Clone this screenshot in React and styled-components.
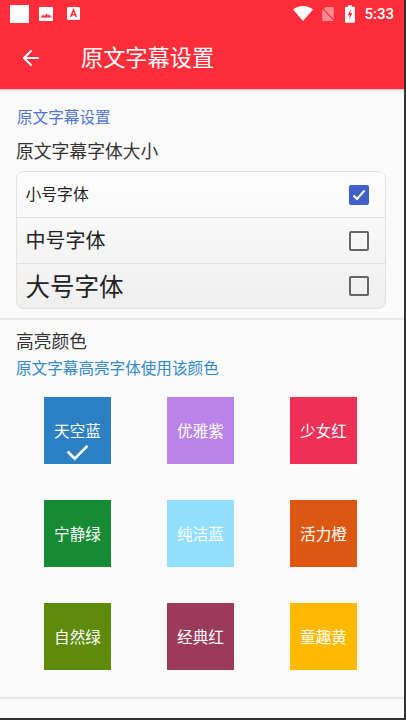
import React from "react";
import styled, { createGlobalStyle } from "styled-components";
import { ArrowLeft } from "lucide-react";

const GlobalStyle = createGlobalStyle`
  html, body {
    margin: 0;
    padding: 0;
    background: #333;
  }
  * {
    box-sizing: border-box;
  }
`;

const FONT = `"Roboto", "Noto Sans CJK SC", sans-serif`;

const Frame = styled.div`
  width: 406px;
  height: 720px;
  padding: 0 2px 2px 0;
  overflow: hidden;
  background: #333;
`;

const Screen = styled.div`
  height: 100%;
  display: flex;
  flex-direction: column;
  background: #fafafa;
  font-family: ${FONT};
`;

const Header = styled.header`
  height: 89px;
  flex: none;
  background: #ff2d3a;
  color: #fff;
  box-shadow: 0 1px 2px rgba(0, 0, 0, 0.25);
  display: flex;
  flex-direction: column;
`;

const StatusBar = styled.div`
  height: 27px;
  padding: 0 10px;
  display: flex;
  align-items: center;
`;

const StatusLeft = styled.div`
  display: flex;
  align-items: center;
  gap: 10px;
  flex: 1;

  svg:last-child {
    margin-left: 4px;
  }
`;

const StatusRight = styled.div`
  display: flex;
  align-items: center;
  gap: 9px;

  svg:nth-child(3) {
    margin-left: 2px;
  }
`;

const Clock = styled.span`
  font-size: 15px;
  font-weight: 500;
`;

const BlankIcon = styled.span`
  width: 19px;
  height: 18px;
  background: #fff;
  display: block;
`;

const Toolbar = styled.div`
  flex: 1;
  display: flex;
  align-items: center;
  padding-left: 19px;
  gap: 38px;
`;

const Title = styled.h1`
  margin: 0;
  font-size: 22.2px;
  font-weight: 400;
  line-height: 30px;
`;

const Section = styled.section`
  padding: ${(p) => p.$padding};
  border-bottom: 2px solid #e8e8e8;
`;

const SectionLabel = styled.div`
  color: ${(p) => p.$color};
  font-size: 15.6px;
  line-height: 20px;
  margin-top: ${(p) => p.$top || 0}px;
  margin-left: ${(p) => p.$indent || 0}px;
`;

const SectionTitle = styled.div`
  color: #333;
  font-size: 17.8px;
  line-height: 24px;
  margin-top: ${(p) => p.$top || 0}px;
`;

const OptionCard = styled.div`
  margin-top: 7px;
  width: 370px;
  border: 1px solid #e2e2e2;
  border-radius: 8px;
  overflow: hidden;
  background: linear-gradient(#fdfdfd, #efefef);
`;

const OptionRow = styled.div`
  height: ${(p) => p.$height}px;
  display: flex;
  align-items: center;
  justify-content: space-between;
  padding: 0 16px 0 8.5px;
  color: #222;
  font-size: ${(p) => p.$size}px;

  & + & {
    border-top: 1.5px solid #dedede;
  }
`;

const OptionText = styled.span`
  padding-bottom: 2px;
`;

const CheckBox = styled.span`
  width: 20px;
  height: 20px;
  border-radius: 2px;
  display: flex;
  align-items: center;
  justify-content: center;
  background: ${(p) => (p.$checked ? "#4060c8" : "transparent")};
  border: ${(p) => (p.$checked ? "none" : "2px solid #666")};
`;

const SwatchGrid = styled.div`
  display: grid;
  grid-template-columns: repeat(3, 67px);
  column-gap: 56px;
  row-gap: 36px;
  margin: 18px 0 0 28px;
`;

const Swatch = styled.div`
  height: 67px;
  padding-bottom: 2px;
  position: relative;
  display: flex;
  align-items: center;
  justify-content: center;
  background: ${(p) => p.$color};
  color: #fff;
  font-size: 15.6px;
`;

const SwatchCheck = styled.svg`
  position: absolute;
  left: 22px;
  bottom: 3px;
  width: 23px;
  height: 17px;
`;

const Wifi = () => (
  <svg width="20" height="15" viewBox="0 0 20 15">
    <path d="M0 3.500C2.600 1.200 6 0 10 0s7.400 1.200 10 3.500L10 15z" fill="#fff" />
  </svg>
);

const NoSim = () => (
  <svg width="12" height="14" viewBox="0 0 14 17">
    <path d="M4 0h9a1 1 0 0 1 1 1v15a1 1 0 0 1-1 1H1a1 1 0 0 1-1-1V4z" fill="#fff" opacity="0.45" />
    <path d="M0 1l14 15" stroke="#ff2d3a" strokeWidth="1.400" />
  </svg>
);

const Battery = () => (
  <svg width="10" height="18" viewBox="0 0 11 19">
    <path
      d="M3.500 0h4v1.500H10a1 1 0 0 1 1 1V18a1 1 0 0 1-1 1H1a1 1 0 0 1-1-1V2.500a1 1 0 0 1 1-1h2.500z"
      fill="#fff"
    />
    <path d="M6.500 4L3 11h2.200l-.7 5L8 8.500H5.700z" fill="#ff2d3a" />
  </svg>
);

const ImageNote = () => (
  <svg width="14" height="14" viewBox="0 0 14 14">
    <rect width="14" height="14" rx="1" fill="#fff" />
    <path d="M1.500 10.500l2.500-3 1.500 1.500 2-2.500 1.500 2 1.500-1 2 3z" fill="#ff2d3a" />
  </svg>
);

const LetterNote = () => (
  <svg width="13" height="13" viewBox="0 0 13 13">
    <rect width="13" height="13" rx="1.500" fill="#fff" />
    <path d="M3.500 10L6.500 3l3 7M4.700 7.800h3.600" stroke="#ff2d3a" strokeWidth="1.500" fill="none" />
  </svg>
);

const SIZE_OPTIONS = [
  { label: "小号字体", size: 15.8, height: 45, checked: true },
  { label: "中号字体", size: 20, height: 46 },
  { label: "大号字体", size: 24.5, height: 45 },
];

const SWATCHES = [
  { label: "天空蓝", color: "#2a80c2", checked: true },
  { label: "优雅紫", color: "#b983ea" },
  { label: "少女红", color: "#ee3056" },
  { label: "宁静绿", color: "#178b33" },
  { label: "纯洁蓝", color: "#93dfff" },
  { label: "活力橙", color: "#dc5812" },
  { label: "自然绿", color: "#5d8a09" },
  { label: "经典红", color: "#9b3a5a" },
  { label: "童趣黄", color: "#ffb900" },
];

const App = () => {
  return (
    <>
      <GlobalStyle />
      <Frame>
        <Screen>
          <Header>
            <StatusBar>
              <StatusLeft>
                <BlankIcon />
                <ImageNote />
                <LetterNote />
              </StatusLeft>
              <StatusRight>
                <Wifi />
                <NoSim />
                <Battery />
                <Clock>5:33</Clock>
              </StatusRight>
            </StatusBar>
            <Toolbar>
              <ArrowLeft size={24} strokeWidth={2} />
              <Title>原文字幕设置</Title>
            </Toolbar>
          </Header>

          <Section $padding="19px 0 9px 16px">
            <SectionLabel $color="#4f74d6" $indent={1}>
              原文字幕设置
            </SectionLabel>
            <SectionTitle $top={12}>原文字幕字体大小</SectionTitle>
            <OptionCard>
              {SIZE_OPTIONS.map((o) => (
                <OptionRow key={o.label} $size={o.size} $height={o.height}>
                  <OptionText>{o.label}</OptionText>
                  <CheckBox $checked={o.checked}>
                    {o.checked && (
                      <svg width="14" height="12" viewBox="0 0 14 12">
                        <path d="M1.500 6.500l3.500 3.500 7.500-8.500" stroke="#fff" strokeWidth="2" fill="none" />
                      </svg>
                    )}
                  </CheckBox>
                </OptionRow>
              ))}
            </OptionCard>
          </Section>

          <Section $padding="10px 0 27px 16px">
            <SectionTitle>高亮颜色</SectionTitle>
            <SectionLabel $color="#3188cc" $top={5}>
              原文字幕高亮字体使用该颜色
            </SectionLabel>
            <SwatchGrid>
              {SWATCHES.map((s) => (
                <Swatch key={s.label} $color={s.color}>
                  {s.label}
                  {s.checked && (
                    <SwatchCheck viewBox="0 0 24 18">
                      <path d="M1.500 8l7.500 7.500L22.500 2" stroke="#fff" strokeWidth="2.800" fill="none" />
                    </SwatchCheck>
                  )}
                </Swatch>
              ))}
            </SwatchGrid>
          </Section>
        </Screen>
      </Frame>
    </>
  );
};

export default App;
